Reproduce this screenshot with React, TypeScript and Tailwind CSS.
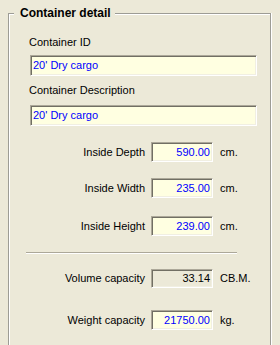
import React from "react";

const sunken =
  "border border-t-[#aca899] border-l-[#aca899] border-r-white border-b-white shadow-[inset_1px_1px_0_#716f64,inset_-1px_-1px_0_#f1efe2]";

function Row({
  label,
  value,
  unit,
  mt,
  disabled,
  h = "h-[20px]",
}: {
  label: string;
  value: string;
  unit: string;
  mt: string;
  disabled?: boolean;
  h?: string;
}) {
  return (
    <div className={`flex items-center ${mt}`}>
      <div className="w-[116px] text-right leading-[13px]">{label}</div>
      <div
        className={`ml-[6px] w-[62px] ${h} ${sunken} flex items-center justify-end pr-[2px] leading-[13px] ${
          disabled ? "bg-[#ece9d8] text-black" : "bg-[#ffffe1] text-[#0000ff]"
        }`}
      >
        {value}
      </div>
      <div className="ml-[7px] leading-[13px]">{unit}</div>
    </div>
  );
}

export default function App() {
  return (
    <div className="w-[280px] h-[345px] bg-[#ece9d8] pt-[13px] pl-[8px] pr-[9px] overflow-hidden font-['Liberation_Sans',Arial,sans-serif] text-[11px] text-black">
      <div className="relative h-[340px] border border-b-0 border-[#9d9c95] shadow-[inset_1px_1px_0_#fff,1px_0_0_#fff] pl-[20px] flex flex-col">
        <div className="absolute left-[5px] top-[-8px] pl-[6px] pr-[4px] bg-[#ece9d8] font-bold text-[12px] leading-[14px]">
          Container detail
        </div>
        <div className="mt-[22px] leading-[13px]">Container ID</div>
        <div
          className={`mt-[6px] ml-[1px] w-[227px] h-[21px] ${sunken} bg-[#ffffe1] text-[#0000ff] flex items-center pl-[2px] leading-[13px]`}
        >
          20' Dry cargo
        </div>
        <div className="mt-[8px] leading-[13px]">Container Description</div>
        <div
          className={`mt-[8px] ml-[1px] w-[227px] h-[21px] ${sunken} bg-[#ffffe1] text-[#0000ff] flex items-center pl-[2px] leading-[13px]`}
        >
          20' Dry cargo
        </div>
        <Row label="Inside Depth" value="590.00" unit="cm." mt="mt-[16px]" />
        <Row label="Inside Width" value="235.00" unit="cm." mt="mt-[16px]" />
        <Row label="Inside Height" value="239.00" unit="cm." mt="mt-[18px]" />
        <div className="mt-[16px] ml-[-3px] w-[211px] border-t border-t-[#aca899] border-b border-b-white" />
        <Row
          label="Volume capacity"
          value="33.14"
          unit="CB.M."
          mt="mt-[15px]"
          disabled
          h="h-[19px]"
        />
        <Row label="Weight capacity" value="21750.00" unit="kg." mt="mt-[22px]" />
      </div>
    </div>
  );
}
